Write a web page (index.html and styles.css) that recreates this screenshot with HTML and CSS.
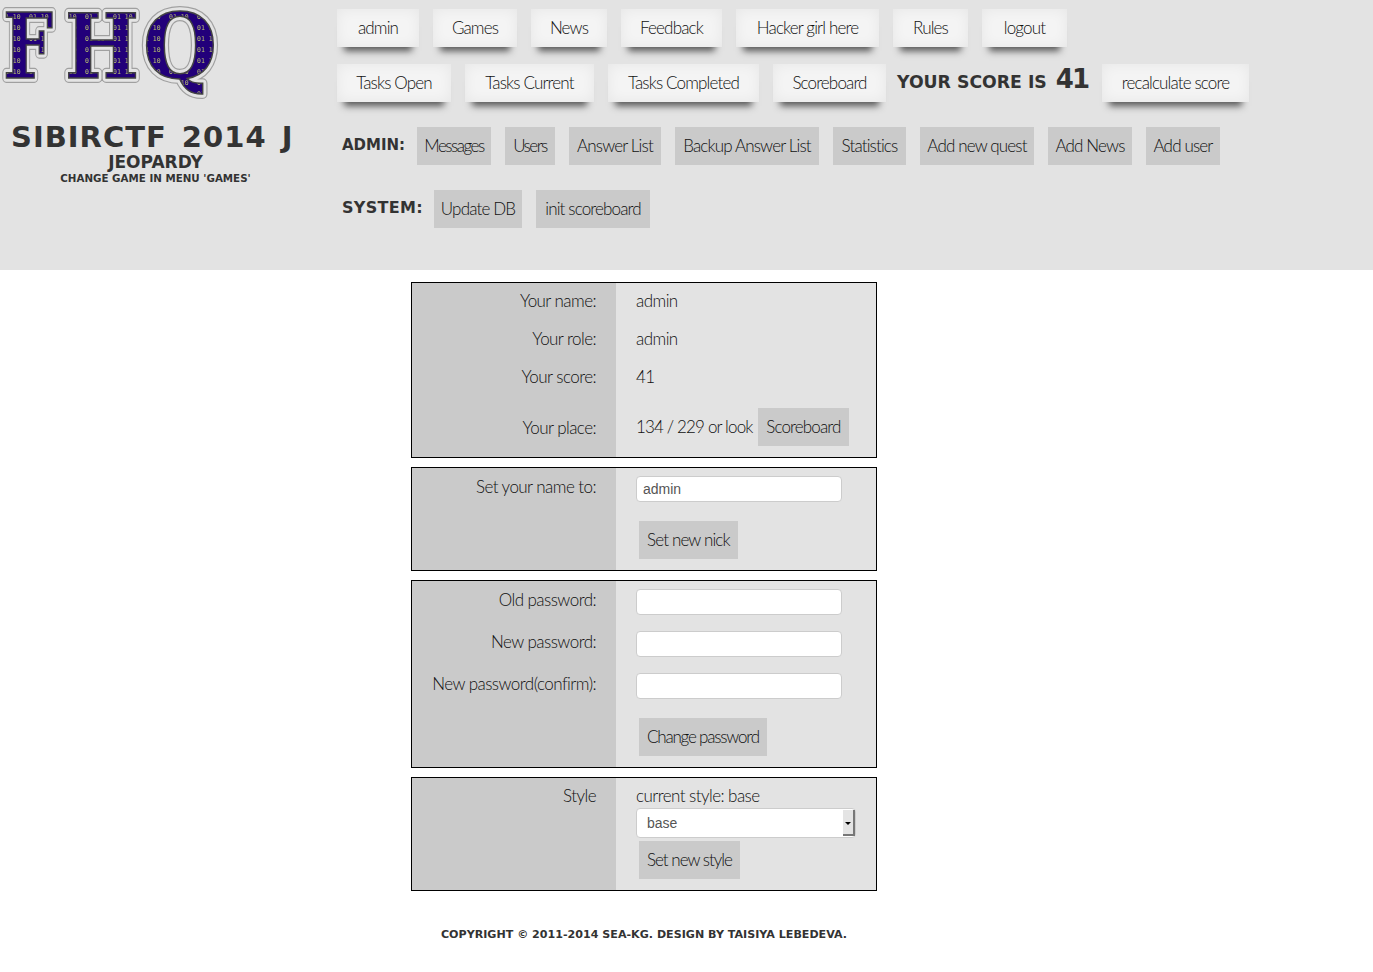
FILE: index.html
```html
<!DOCTYPE html>
<html lang="en">
<head>
    <meta charset="UTF-8">
    <meta name="viewport" content="width=device-width, initial-scale=1.0">
    <title>FHQ - User</title>
    <link rel="stylesheet" href="styles.css">
</head>
<body>
    <header class="site-header">
        <div class="brand">
            <svg class="logo" width="222" height="104" viewBox="0 0 222 104" role="img" aria-label="FHQ">
                <defs>
                    <pattern id="binary" width="28" height="11" patternUnits="userSpaceOnUse">
                        <rect width="28" height="11" fill="#22007a"/>
                        <text class="logo-bits" x="1" y="8">01 10</text>
                    </pattern>
                    <g id="letters">
                        <text x="3" y="78" textLength="50" lengthAdjust="spacingAndGlyphs">F</text>
                        <text x="65" y="78" textLength="74" lengthAdjust="spacingAndGlyphs">H</text>
                        <text x="143" y="78" textLength="74" lengthAdjust="spacingAndGlyphs">Q</text>
                    </g>
                </defs>
                <use class="logo-ring" href="#letters"/>
                <use class="logo-gap" href="#letters"/>
                <use class="logo-fill" href="#letters"/>
            </svg>
            <div class="game-title">SIBIRCTF 2014 J</div>
            <div class="game-type">JEOPARDY</div>
            <div class="game-hint">CHANGE GAME IN MENU 'GAMES'</div>
        </div>

        <nav class="menu">
            <div class="menu-row menu-row-main">
                <a class="btn-main">admin</a>
                <a class="btn-main">Games</a>
                <a class="btn-main">News</a>
                <a class="btn-main">Feedback</a>
                <a class="btn-main">Hacker girl here</a>
                <a class="btn-main">Rules</a>
                <a class="btn-main">logout</a>
            </div>
            <div class="menu-row menu-row-tasks">
                <a class="btn-main">Tasks Open</a>
                <a class="btn-main">Tasks Current</a>
                <a class="btn-main">Tasks Completed</a>
                <a class="btn-main">Scoreboard</a>
                <span class="score-text">YOUR SCORE IS <b class="score-num">41</b></span>
                <a class="btn-main">recalculate score</a>
            </div>
            <div class="menu-row menu-row-admin">
                <span class="menu-label">ADMIN:</span>
                <a class="btn btn-tight">Messages</a>
                <a class="btn btn-tight">Users</a>
                <a class="btn">Answer List</a>
                <a class="btn">Backup Answer List</a>
                <a class="btn">Statistics</a>
                <a class="btn">Add new quest</a>
                <a class="btn">Add News</a>
                <a class="btn">Add user</a>
            </div>
            <div class="menu-row menu-row-system">
                <span class="menu-label label-system">SYSTEM:</span>
                <a class="btn">Update DB</a>
                <a class="btn">init scoreboard</a>
            </div>
        </nav>
    </header>

    <main class="content">
        <table class="panel">
            <tr class="row-text">
                <td class="cell-label">Your name:</td>
                <td class="cell-value">admin</td>
            </tr>
            <tr class="row-text">
                <td class="cell-label">Your role:</td>
                <td class="cell-value">admin</td>
            </tr>
            <tr class="row-text">
                <td class="cell-label">Your score:</td>
                <td class="cell-value">41</td>
            </tr>
            <tr class="row-action">
                <td class="cell-label">Your place:</td>
                <td class="cell-value cell-place">134 / 229 or look <a class="btn btn-inline">Scoreboard</a></td>
            </tr>
        </table>

        <table class="panel">
            <tr class="row-field">
                <td class="cell-label">Set your name to:</td>
                <td class="cell-value"><input class="field" type="text" value="admin"></td>
            </tr>
            <tr class="row-action">
                <td class="cell-label"></td>
                <td class="cell-value"><a class="btn btn-form">Set new nick</a></td>
            </tr>
        </table>

        <table class="panel">
            <tr class="row-field">
                <td class="cell-label">Old password:</td>
                <td class="cell-value"><input class="field" type="password"></td>
            </tr>
            <tr class="row-field">
                <td class="cell-label">New password:</td>
                <td class="cell-value"><input class="field" type="password"></td>
            </tr>
            <tr class="row-field">
                <td class="cell-label">New password(confirm):</td>
                <td class="cell-value"><input class="field" type="password"></td>
            </tr>
            <tr class="row-action">
                <td class="cell-label"></td>
                <td class="cell-value"><a class="btn btn-form btn-long">Change password</a></td>
            </tr>
        </table>

        <table class="panel">
            <tr class="row-style">
                <td class="cell-label cell-top">Style</td>
                <td class="cell-value cell-top">
                    <div class="current-style">current style: base</div>
                    <div class="select-box">
                        <span class="select-text">base</span>
                        <span class="select-arrow"></span>
                    </div>
                    <a class="btn btn-form btn-style">Set new style</a>
                </td>
            </tr>
        </table>

        <footer class="copyright">COPYRIGHT © 2011-2014 SEA-KG. DESIGN BY TAISIYA LEBEDEVA.</footer>
    </main>
</body>
</html>
```

FILE: styles.css
```css
body {
    margin: 0;
    background: #fff;
    color: #111;
    font-family: 'Lato', sans-serif;
    font-size: 17px;
    font-weight: 300;
    letter-spacing: -0.55px;
}

/* header */
.site-header {
    display: flex;
    height: 270px;
    background: #e3e3e3;
}
.brand {
    width: 337px;
    flex-shrink: 0;
}
.logo {
    display: block;
}
.logo text {
    font-family: 'DejaVu Serif', serif;
    font-size: 89px;
    font-weight: bold;
    letter-spacing: 0;
}
.logo-ring {
    fill: #a0a0a0;
    stroke: #a0a0a0;
    stroke-width: 10px;
    stroke-linejoin: round;
}
.logo-gap {
    fill: #e4e4e4;
    stroke: #e4e4e4;
    stroke-width: 7.5px;
    stroke-linejoin: round;
}
.logo-fill {
    fill: url(#binary);
    stroke: #444;
    stroke-width: 1.5px;
}
.logo .logo-bits {
    font-family: 'DejaVu Sans Mono', monospace;
    font-size: 6.5px;
    font-weight: normal;
    fill: #b9c46e;
}
.game-title,
.game-type,
.game-hint,
.menu-label,
.score-text,
.copyright {
    font-family: 'DejaVu Sans', sans-serif;
    font-weight: bold;
    color: #333;
    white-space: nowrap;
}
.game-title {
    margin: 18px 0 0 11px;
    font-size: 29px;
    line-height: 31px;
    letter-spacing: 1px;
    word-spacing: 4px;
}
.game-type {
    width: 311px;
    font-size: 17px;
    line-height: 18px;
    letter-spacing: 0;
    text-align: center;
}
.game-hint {
    width: 311px;
    font-size: 10.3px;
    line-height: 14px;
    letter-spacing: 0;
    text-align: center;
}

.menu {
    padding-top: 9px;
}
.menu-row {
    display: grid;
    align-items: center;
    gap: 14px;
    height: 38px;
    margin-bottom: 17px;
    white-space: nowrap;
    text-align: center;
}
.menu-row-main {
    grid-template-columns: 82px 84px 76px 101px 143px 75px 85px;
}
.menu-row-tasks {
    grid-template-columns: 114px 129px 151px 113px 188px 147px;
}
.menu-row-admin,
.menu-row-system {
    margin-top: 25px;
    margin-bottom: 0;
}
.menu-row-admin {
    grid-template-columns: 66px 74px 50px 92px 144px 73px 114px 84px 74px;
}
.menu-row-system {
    grid-template-columns: 83px 88px 114px;
}
.btn-main {
    height: 38px;
    line-height: 37px;
    background: #f4f4f4;
    letter-spacing: -0.85px;
    box-shadow: inset 0 0 14px rgba(0,0,0,0.06), 0 11px 7px -7px #555;
}
.btn {
    height: 38px;
    line-height: 37px;
    background: #cacaca;
    letter-spacing: -0.85px;
}
.btn-tight {
    letter-spacing: -1.5px;
}
.menu-label {
    margin-left: 5px;
    margin-bottom: 3px;
    font-size: 15px;
    letter-spacing: 0;
    text-align: left;
}
.label-system {
    font-size: 16px;
    letter-spacing: 0.3px;
}
.score-text {
    margin-left: -3px;
    margin-bottom: 8px;
    font-size: 17.3px;
    letter-spacing: 0;
    text-align: left;
}
.score-num {
    margin-left: 3px;
    font-size: 26px;
    letter-spacing: -2px;
}

/* panels */
.content {
    width: 466px;
    margin: 12px 0 0 411px;
}
.panel {
    width: 466px;
    margin-bottom: 9px;
    table-layout: fixed;
    border: 1px solid #000;
    border-spacing: 0;
}
.panel td {
    padding: 0;
}
.panel .cell-label {
    width: 184px;
    padding-right: 20px;
    background: #cacaca;
    text-align: right;
}
.panel .cell-value {
    padding-left: 20px;
    background: #e3e3e3;
    white-space: nowrap;
}
.panel .cell-place {
    letter-spacing: -0.85px;
}
.row-text {
    height: 38px;
}
.panel .row-text td {
    padding-bottom: 3px;
}
.row-field {
    height: 42px;
}
.row-field .cell-label {
    vertical-align: top;
    padding-top: 8px;
    line-height: 21px;
}
.row-action {
    height: 60px;
}
.row-style {
    height: 112px;
}
.panel .cell-top {
    vertical-align: top;
    padding-top: 7px;
    line-height: 21px;
}
.panel .btn {
    display: inline-block;
    padding: 0 8px;
}
.btn-inline {
    margin-left: 2px;
}
.btn-form {
    margin-left: 3px;
}
.panel .btn-long {
    letter-spacing: -1.2px;
}
.panel .btn-style {
    letter-spacing: -1px;
}
.field {
    display: block;
    box-sizing: border-box;
    width: 206px;
    height: 26px;
    padding: 0 6px;
    border: 1px solid #ccc;
    border-radius: 4px;
    background: #fff;
    color: #555;
    font-family: 'Liberation Sans', sans-serif;
    font-size: 14px;
    letter-spacing: 0;
}
.current-style {
    height: 23px;
}
.select-box {
    display: flex;
    box-sizing: border-box;
    width: 220px;
    height: 30px;
    margin-bottom: 3px;
    border: 1px solid #ccc;
    border-radius: 4px;
    background: #fff;
}
.select-text {
    flex: 1;
    padding-left: 10px;
    color: #555;
    font-family: 'Liberation Sans', sans-serif;
    font-size: 14px;
    font-weight: normal;
    letter-spacing: 0;
    line-height: 28px;
}
.select-arrow {
    position: relative;
    width: 10px;
    margin: 1px 0;
    background: #e4e4e4;
    border-right: 2px solid #777;
    border-bottom: 2px solid #777;
}
.select-arrow::after {
    content: "";
    position: absolute;
    top: 12px;
    left: 2px;
    border: 3px solid transparent;
    border-top: 3px solid #000;
}
.copyright {
    margin-top: 37px;
    font-size: 11.1px;
    letter-spacing: 0;
    text-align: center;
}
```
